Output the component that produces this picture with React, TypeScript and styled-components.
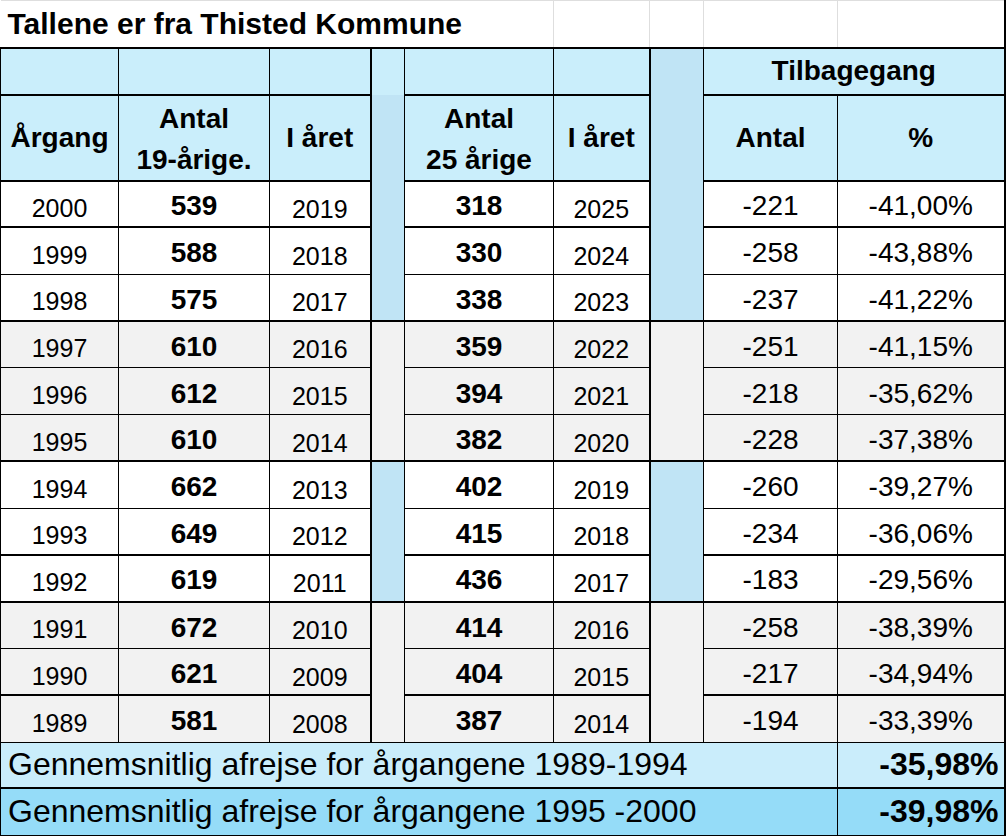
import React from 'react';
import styled, { createGlobalStyle } from 'styled-components';

const colors = {
  header: '#CAEEFB',
  spacer: '#C0E4F5',
  band: '#F2F2F2',
  white: '#FFFFFF',
  footer: '#CAEDFB',
  footerDark: '#95DCF8',
  grid: '#DEDEDE',
  line: '#000000',
};

const GlobalStyle = createGlobalStyle`
  html, body {
    margin: 0;
    padding: 0;
    background: #fff;
  }
  body {
    font-family: "Liberation Sans", Arial, sans-serif;
    color: #000;
  }
`;

const Sheet = styled.table`
  border-collapse: collapse;
  table-layout: fixed;
  width: 1004px;
  border-right: 2px solid ${colors.line};
`;

const TitleRow = styled.tr`
  height: 47px;
`;

const TitleCell = styled.td`
  padding: 0 0 0 7px;
  font-size: 30px;
  font-weight: 700;
  white-space: nowrap;
  vertical-align: middle;
  border-top: 1px solid ${colors.grid};
  border-right: 1px solid ${colors.grid};
`;

const GridCell = styled.td`
  padding: 0;
  border-top: 1px solid ${colors.grid};
  border-right: 1px solid ${colors.grid};
`;

const HeadRow = styled.tr<{ $h: number }>`
  height: ${(p) => p.$h}px;
`;

const HeadCell = styled.td<{ $top?: number; $noBottom?: boolean; $bg?: string }>`
  padding: 0;
  background: ${(p) => p.$bg ?? colors.header};
  border: 1px solid ${colors.line};
  border-top: ${(p) => p.$top ?? 2}px solid ${colors.line};
  ${(p) => (p.$noBottom ? 'border-bottom: none;' : 'border-bottom: 2px solid #000;')}
  font-size: 28px;
  font-weight: 700;
  line-height: 42px;
  text-align: center;
  vertical-align: middle;
`;

const TwoLine = styled.div`
  padding-top: 2px;
  line-height: 41px;
`;

const SpacerCell = styled.td<{ $bg: string; $top?: string }>`
  padding: 0;
  background: ${(p) => p.$bg};
  border-left: 2px solid ${colors.line};
  border-right: 1px solid ${colors.line};
  border-top: ${(p) => p.$top ?? 'none'};
`;

const DataRow = styled.tr<{ $bg: string }>`
  height: 46.8px;
  background: ${(p) => p.$bg};
`;

type Kind = 'cohort' | 'year' | 'count' | 'delta';

const lift: Record<Kind, number> = { cohort: 4, year: 3, count: 4, delta: 4 };

const DataCell = styled.td<{ $kind: Kind; $top: number }>`
  padding: 0 0 ${(p) => lift[p.$kind]}px;
  border: 1px solid ${colors.line};
  border-top: ${(p) => p.$top}px solid ${colors.line};
  font-size: ${(p) => (p.$kind === 'year' || p.$kind === 'cohort' ? 25 : 28)}px;
  font-weight: ${(p) => (p.$kind === 'count' ? 700 : 400)};
  line-height: 1.15;
  text-align: center;
  vertical-align: bottom;
`;

const FooterRow = styled.tr<{ $h: number; $bg: string }>`
  height: ${(p) => p.$h}px;
  background: ${(p) => p.$bg};
`;

const FooterLabel = styled.td<{ $top: number }>`
  padding: 0 0 0 7px;
  border: 1px solid ${colors.line};
  border-top: ${(p) => p.$top}px solid ${colors.line};
  font-size: 32px;
  white-space: nowrap;
  vertical-align: middle;
`;

const FooterValue = styled.td<{ $top: number }>`
  padding: 0 5px 0 0;
  border: 1px solid ${colors.line};
  border-top: ${(p) => p.$top}px solid ${colors.line};
  font-size: 32px;
  font-weight: 700;
  text-align: right;
  vertical-align: middle;
`;

const widths = [118, 151, 101, 34, 149, 96, 54, 134, 167];

type Row = [number, number, number, number, number, number, string];

const rows: Row[] = [
  [2000, 539, 2019, 318, 2025, -221, '-41,00%'],
  [1999, 588, 2018, 330, 2024, -258, '-43,88%'],
  [1998, 575, 2017, 338, 2023, -237, '-41,22%'],
  [1997, 610, 2016, 359, 2022, -251, '-41,15%'],
  [1996, 612, 2015, 394, 2021, -218, '-35,62%'],
  [1995, 610, 2014, 382, 2020, -228, '-37,38%'],
  [1994, 662, 2013, 402, 2019, -260, '-39,27%'],
  [1993, 649, 2012, 415, 2018, -234, '-36,06%'],
  [1992, 619, 2011, 436, 2017, -183, '-29,56%'],
  [1991, 672, 2010, 414, 2016, -258, '-38,39%'],
  [1990, 621, 2009, 404, 2015, -217, '-34,94%'],
  [1989, 581, 2008, 387, 2014, -194, '-33,39%'],
];

// top line weight of each data row, as Excel drew it
const topWeights = [1, 2, 1, 2, 1, 1, 2, 1, 2, 2, 1, 2];

export default function App() {
  return (
    <>
      <GlobalStyle />
      <Sheet>
        <colgroup>
          {widths.map((w, i) => (
            <col key={i} style={{ width: w }} />
          ))}
        </colgroup>
        <tbody>
          <TitleRow>
            <TitleCell colSpan={5}>Tallene er fra Thisted Kommune</TitleCell>
            <GridCell />
            <GridCell />
            <GridCell />
            <GridCell />
          </TitleRow>

          <HeadRow $h={47}>
            <HeadCell />
            <HeadCell />
            <HeadCell />
            <HeadCell $noBottom style={{ borderLeftWidth: 2 }} />
            <HeadCell />
            <HeadCell />
            <SpacerCell rowSpan={5} $bg={colors.spacer} $top="2px solid #000" />
            <HeadCell colSpan={2}>Tilbagegang</HeadCell>
          </HeadRow>

          <HeadRow $h={85}>
            <HeadCell $top={2}>Årgang</HeadCell>
            <HeadCell $top={2}>
              <TwoLine>
                Antal
                <br />
                19-årige.
              </TwoLine>
            </HeadCell>
            <HeadCell $top={2}>I året</HeadCell>
            <SpacerCell rowSpan={4} $bg={colors.spacer} />
            <HeadCell $top={2}>
              <TwoLine>
                Antal
                <br />
                25 årige
              </TwoLine>
            </HeadCell>
            <HeadCell $top={2}>I året</HeadCell>
            <HeadCell $top={2}>Antal</HeadCell>
            <HeadCell $top={2}>%</HeadCell>
          </HeadRow>

          {rows.map((r, i) => {
            const group = Math.floor(i / 3);
            const bg = group % 2 === 0 ? colors.white : colors.band;
            const spacerBg = group % 2 === 0 ? colors.spacer : colors.band;
            const top = topWeights[i];
            const startsGroup = i % 3 === 0 && i > 0;
            return (
              <DataRow key={r[0]} $bg={bg}>
                <DataCell $kind="cohort" $top={top}>{r[0]}</DataCell>
                <DataCell $kind="count" $top={top}>{r[1]}</DataCell>
                <DataCell $kind="year" $top={top}>{r[2]}</DataCell>
                {startsGroup && (
                  <SpacerCell rowSpan={3} $bg={spacerBg} $top={`${top}px solid #000`} />
                )}
                <DataCell $kind="count" $top={top}>{r[3]}</DataCell>
                <DataCell $kind="year" $top={top}>{r[4]}</DataCell>
                {startsGroup && (
                  <SpacerCell rowSpan={3} $bg={spacerBg} $top={`${top}px solid #000`} />
                )}
                <DataCell $kind="delta" $top={top}>{r[5]}</DataCell>
                <DataCell $kind="delta" $top={top}>{r[6]}</DataCell>
              </DataRow>
            );
          })}

          <FooterRow $h={46} $bg={colors.footer}>
            <FooterLabel colSpan={8} $top={1}>
              Gennemsnitlig afrejse for årgangene 1989-1994
            </FooterLabel>
            <FooterValue $top={1}>-35,98%</FooterValue>
          </FooterRow>
          <FooterRow $h={47} $bg={colors.footerDark}>
            <FooterLabel colSpan={8} $top={2}>
              Gennemsnitlig afrejse for årgangene 1995 -2000
            </FooterLabel>
            <FooterValue $top={2}>-39,98%</FooterValue>
          </FooterRow>
        </tbody>
      </Sheet>
    </>
  );
}
